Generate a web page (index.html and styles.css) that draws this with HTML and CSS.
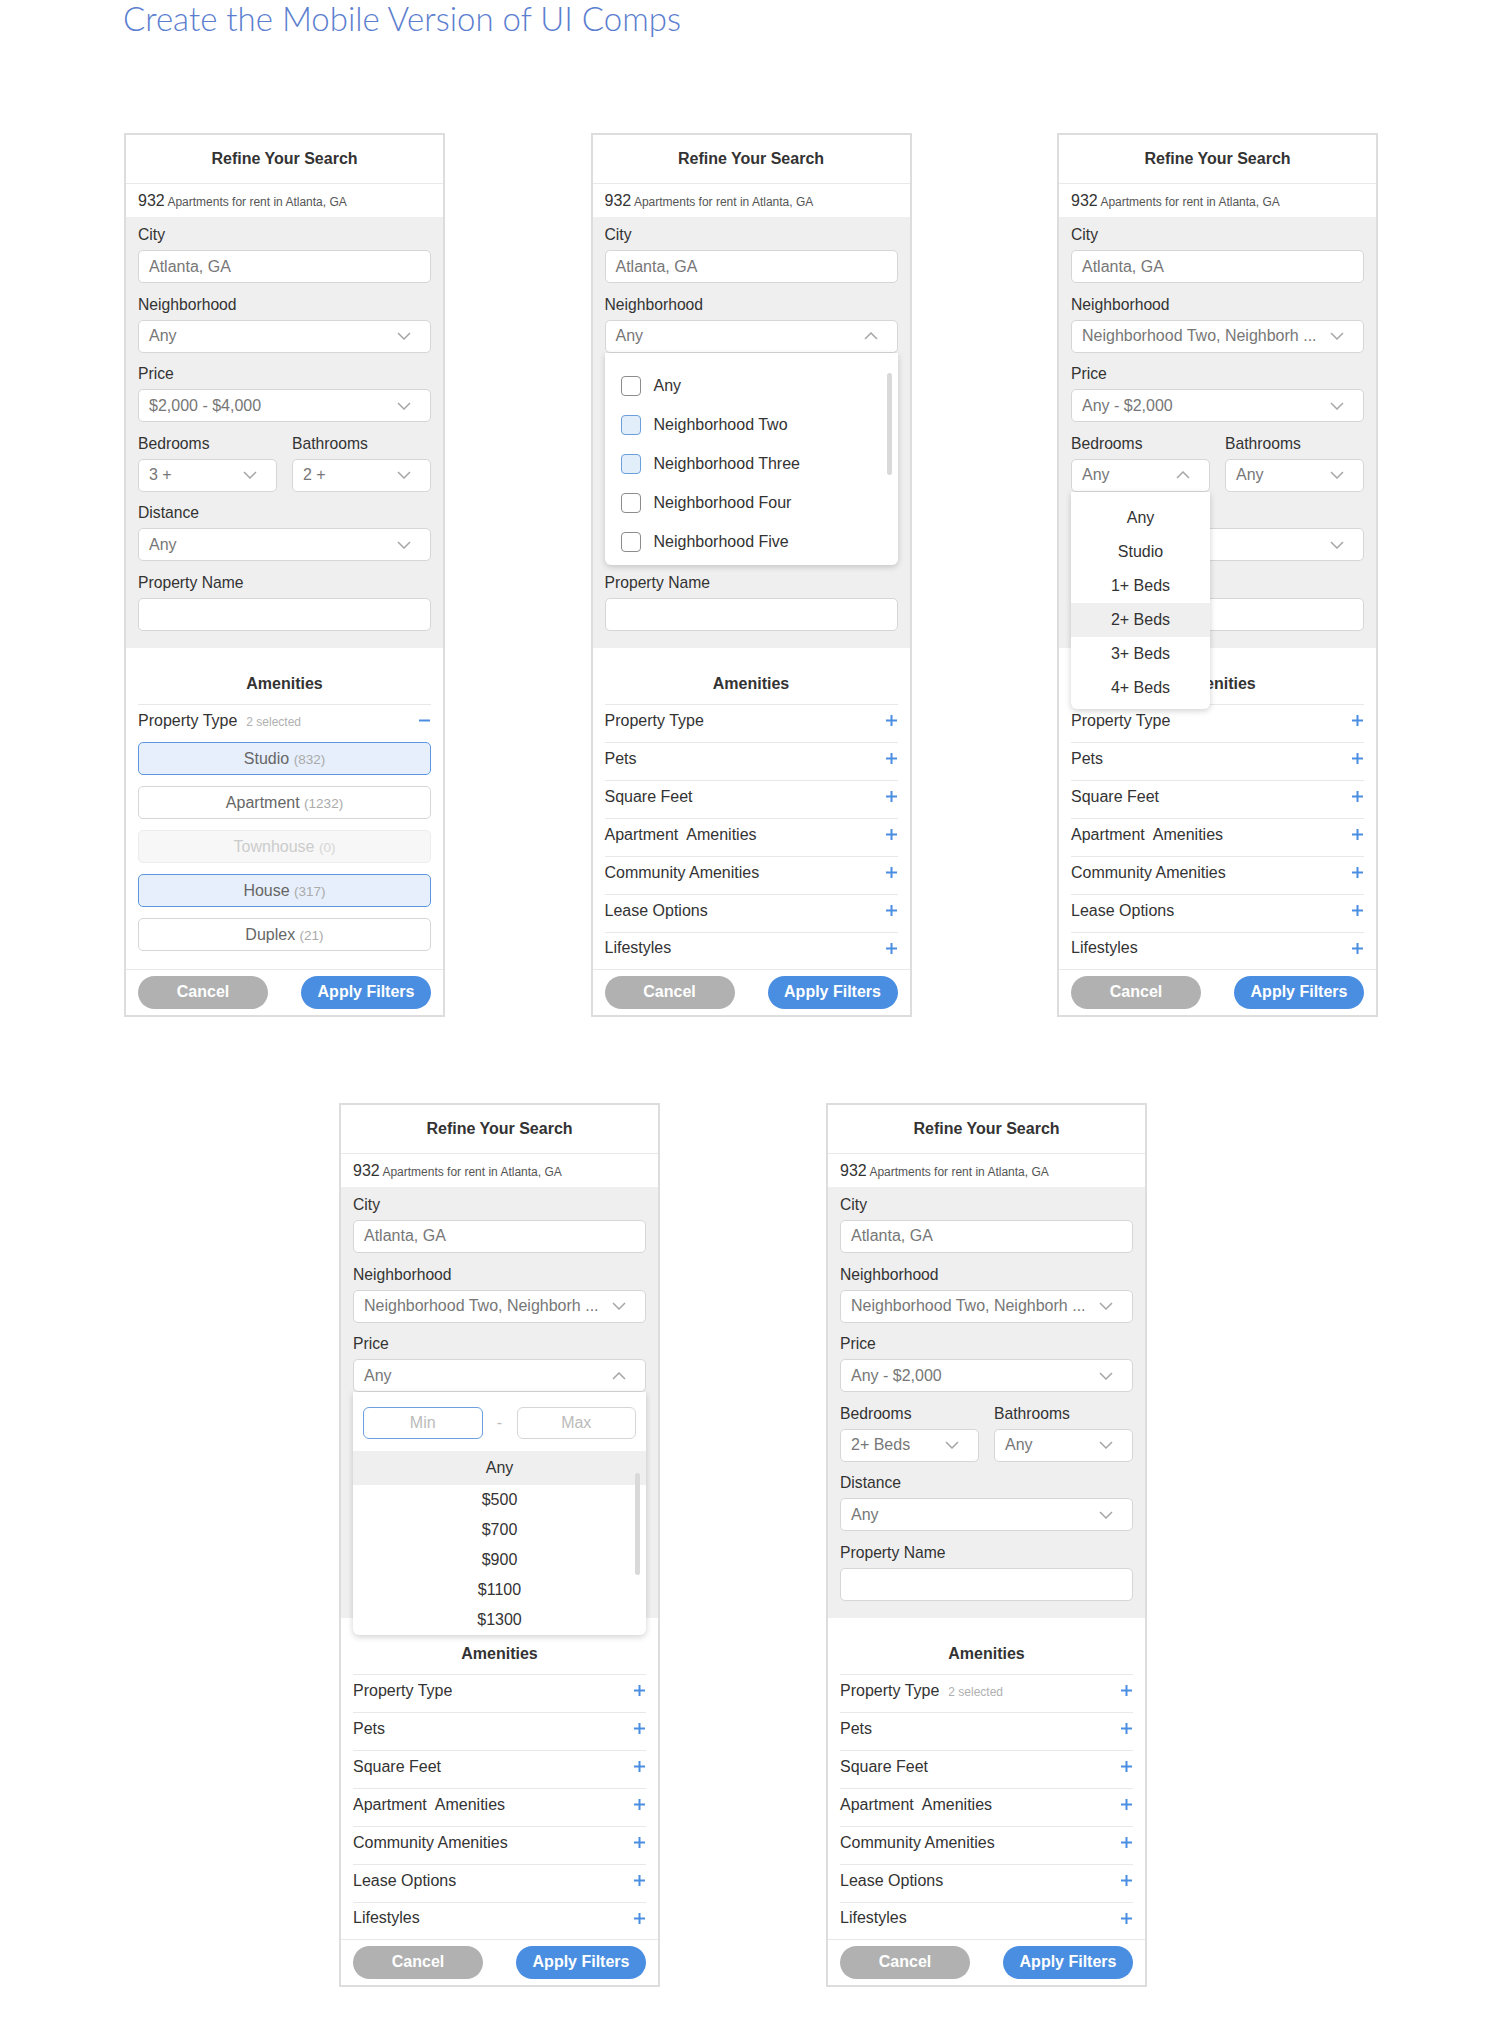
FILE: index.html
```html
<!DOCTYPE html>
<html lang="en">
<head>
    <meta charset="UTF-8">
    <meta name="viewport" content="width=device-width, initial-scale=1.0">
    <title>Mobile Version of UI Comps</title>
    <link rel="stylesheet" href="styles.css">
</head>
<body>
    <h1 class="page-title">Create the Mobile Version of UI Comps</h1>

    <div class="row row-top">

        <!-- 1: property type expanded -->
        <div class="panel">
            <div class="panel-head">Refine Your Search</div>
            <div class="panel-count"><span class="num">932</span> Apartments for rent in Atlanta, GA</div>
            <div class="fields">
                <div class="field">
                    <label>City</label>
                    <div class="control">Atlanta, GA</div>
                </div>
                <div class="field">
                    <label>Neighborhood</label>
                    <div class="control select"><span>Any</span><svg class="chev" viewBox="0 0 14 8"><path d="M1 1l6 6 6-6"/></svg></div>
                </div>
                <div class="field">
                    <label>Price</label>
                    <div class="control select"><span>$2,000 - $4,000</span><svg class="chev" viewBox="0 0 14 8"><path d="M1 1l6 6 6-6"/></svg></div>
                </div>
                <div class="field-pair">
                    <div class="field">
                        <label>Bedrooms</label>
                        <div class="control select"><span>3 +</span><svg class="chev" viewBox="0 0 14 8"><path d="M1 1l6 6 6-6"/></svg></div>
                    </div>
                    <div class="field">
                        <label>Bathrooms</label>
                        <div class="control select"><span>2 +</span><svg class="chev" viewBox="0 0 14 8"><path d="M1 1l6 6 6-6"/></svg></div>
                    </div>
                </div>
                <div class="field">
                    <label>Distance</label>
                    <div class="control select"><span>Any</span><svg class="chev" viewBox="0 0 14 8"><path d="M1 1l6 6 6-6"/></svg></div>
                </div>
                <div class="field">
                    <label>Property Name</label>
                    <div class="control"></div>
                </div>
            </div>
            <div class="amenities">
                <div class="amenities-title">Amenities</div>
                <div class="acc-open">
                    <div class="acc-row">
                        <span>Property Type<small>2 selected</small></span>
                        <svg class="plus" viewBox="0 0 11 11"><path d="M0 5.5h11"/></svg>
                    </div>
                    <div class="type-list">
                        <div class="type-opt selected">Studio <em>(832)</em></div>
                        <div class="type-opt">Apartment <em>(1232)</em></div>
                        <div class="type-opt disabled">Townhouse <em>(0)</em></div>
                        <div class="type-opt selected">House <em>(317)</em></div>
                        <div class="type-opt">Duplex <em>(21)</em></div>
                    </div>
                </div>
            </div>
            <div class="panel-foot">
                <button class="btn btn-cancel">Cancel</button>
                <button class="btn btn-apply">Apply Filters</button>
            </div>
        </div>

        <!-- 2: neighborhood open -->
        <div class="panel">
            <div class="panel-head">Refine Your Search</div>
            <div class="panel-count"><span class="num">932</span> Apartments for rent in Atlanta, GA</div>
            <div class="fields">
                <div class="field">
                    <label>City</label>
                    <div class="control">Atlanta, GA</div>
                </div>
                <div class="field">
                    <label>Neighborhood</label>
                    <div class="dd-wrap">
                        <div class="control select open"><span>Any</span><svg class="chev" viewBox="0 0 14 8"><path d="M1 7l6-6 6 6"/></svg></div>
                        <div class="dropdown check-list">
                            <div class="check-item"><i class="box"></i>Any</div>
                            <div class="check-item"><i class="box on"></i>Neighborhood Two</div>
                            <div class="check-item"><i class="box on"></i>Neighborhood Three</div>
                            <div class="check-item"><i class="box"></i>Neighborhood Four</div>
                            <div class="check-item"><i class="box"></i>Neighborhood Five</div>
                            <div class="scrollbar sb-check"></div>
                        </div>
                    </div>
                </div>
                <div class="field">
                    <label>Price</label>
                    <div class="control select"><span>Any</span><svg class="chev" viewBox="0 0 14 8"><path d="M1 1l6 6 6-6"/></svg></div>
                </div>
                <div class="field-pair">
                    <div class="field">
                        <label>Bedrooms</label>
                        <div class="control select"><span>Any</span><svg class="chev" viewBox="0 0 14 8"><path d="M1 1l6 6 6-6"/></svg></div>
                    </div>
                    <div class="field">
                        <label>Bathrooms</label>
                        <div class="control select"><span>Any</span><svg class="chev" viewBox="0 0 14 8"><path d="M1 1l6 6 6-6"/></svg></div>
                    </div>
                </div>
                <div class="field">
                    <label>Distance</label>
                    <div class="control select"><span>Any</span><svg class="chev" viewBox="0 0 14 8"><path d="M1 1l6 6 6-6"/></svg></div>
                </div>
                <div class="field">
                    <label>Property Name</label>
                    <div class="control"></div>
                </div>
            </div>
            <div class="amenities">
                <div class="amenities-title">Amenities</div>
                <div class="acc-row"><span>Property Type</span><svg class="plus" viewBox="0 0 11 11"><path d="M5.5 0v11M0 5.5h11"/></svg></div>
                <div class="acc-row"><span>Pets</span><svg class="plus" viewBox="0 0 11 11"><path d="M5.5 0v11M0 5.5h11"/></svg></div>
                <div class="acc-row"><span>Square Feet</span><svg class="plus" viewBox="0 0 11 11"><path d="M5.5 0v11M0 5.5h11"/></svg></div>
                <div class="acc-row"><span>Apartment&nbsp; Amenities</span><svg class="plus" viewBox="0 0 11 11"><path d="M5.5 0v11M0 5.5h11"/></svg></div>
                <div class="acc-row"><span>Community Amenities</span><svg class="plus" viewBox="0 0 11 11"><path d="M5.5 0v11M0 5.5h11"/></svg></div>
                <div class="acc-row"><span>Lease Options</span><svg class="plus" viewBox="0 0 11 11"><path d="M5.5 0v11M0 5.5h11"/></svg></div>
                <div class="acc-row"><span>Lifestyles</span><svg class="plus" viewBox="0 0 11 11"><path d="M5.5 0v11M0 5.5h11"/></svg></div>
            </div>
            <div class="panel-foot">
                <button class="btn btn-cancel">Cancel</button>
                <button class="btn btn-apply">Apply Filters</button>
            </div>
        </div>

        <!-- 3: bedrooms open -->
        <div class="panel">
            <div class="panel-head">Refine Your Search</div>
            <div class="panel-count"><span class="num">932</span> Apartments for rent in Atlanta, GA</div>
            <div class="fields">
                <div class="field">
                    <label>City</label>
                    <div class="control">Atlanta, GA</div>
                </div>
                <div class="field">
                    <label>Neighborhood</label>
                    <div class="control select"><span>Neighborhood Two, Neighborh ...</span><svg class="chev" viewBox="0 0 14 8"><path d="M1 1l6 6 6-6"/></svg></div>
                </div>
                <div class="field">
                    <label>Price</label>
                    <div class="control select"><span>Any - $2,000</span><svg class="chev" viewBox="0 0 14 8"><path d="M1 1l6 6 6-6"/></svg></div>
                </div>
                <div class="field-pair">
                    <div class="field">
                        <label>Bedrooms</label>
                        <div class="dd-wrap">
                            <div class="control select open"><span>Any</span><svg class="chev" viewBox="0 0 14 8"><path d="M1 7l6-6 6 6"/></svg></div>
                            <div class="dropdown beds-list">
                                <div class="opt">Any</div>
                                <div class="opt">Studio</div>
                                <div class="opt">1+ Beds</div>
                                <div class="opt active">2+ Beds</div>
                                <div class="opt">3+ Beds</div>
                                <div class="opt">4+ Beds</div>
                            </div>
                        </div>
                    </div>
                    <div class="field">
                        <label>Bathrooms</label>
                        <div class="control select"><span>Any</span><svg class="chev" viewBox="0 0 14 8"><path d="M1 1l6 6 6-6"/></svg></div>
                    </div>
                </div>
                <div class="field">
                    <label>Distance</label>
                    <div class="control select"><span>Any</span><svg class="chev" viewBox="0 0 14 8"><path d="M1 1l6 6 6-6"/></svg></div>
                </div>
                <div class="field">
                    <label>Property Name</label>
                    <div class="control"></div>
                </div>
            </div>
            <div class="amenities">
                <div class="amenities-title">Amenities</div>
                <div class="acc-row"><span>Property Type</span><svg class="plus" viewBox="0 0 11 11"><path d="M5.5 0v11M0 5.5h11"/></svg></div>
                <div class="acc-row"><span>Pets</span><svg class="plus" viewBox="0 0 11 11"><path d="M5.5 0v11M0 5.5h11"/></svg></div>
                <div class="acc-row"><span>Square Feet</span><svg class="plus" viewBox="0 0 11 11"><path d="M5.5 0v11M0 5.5h11"/></svg></div>
                <div class="acc-row"><span>Apartment&nbsp; Amenities</span><svg class="plus" viewBox="0 0 11 11"><path d="M5.5 0v11M0 5.5h11"/></svg></div>
                <div class="acc-row"><span>Community Amenities</span><svg class="plus" viewBox="0 0 11 11"><path d="M5.5 0v11M0 5.5h11"/></svg></div>
                <div class="acc-row"><span>Lease Options</span><svg class="plus" viewBox="0 0 11 11"><path d="M5.5 0v11M0 5.5h11"/></svg></div>
                <div class="acc-row"><span>Lifestyles</span><svg class="plus" viewBox="0 0 11 11"><path d="M5.5 0v11M0 5.5h11"/></svg></div>
            </div>
            <div class="panel-foot">
                <button class="btn btn-cancel">Cancel</button>
                <button class="btn btn-apply">Apply Filters</button>
            </div>
        </div>
    </div>

    <div class="row row-bottom">

        <!-- 4: price open -->
        <div class="panel">
            <div class="panel-head">Refine Your Search</div>
            <div class="panel-count"><span class="num">932</span> Apartments for rent in Atlanta, GA</div>
            <div class="fields">
                <div class="field">
                    <label>City</label>
                    <div class="control">Atlanta, GA</div>
                </div>
                <div class="field">
                    <label>Neighborhood</label>
                    <div class="control select"><span>Neighborhood Two, Neighborh ...</span><svg class="chev" viewBox="0 0 14 8"><path d="M1 1l6 6 6-6"/></svg></div>
                </div>
                <div class="field">
                    <label>Price</label>
                    <div class="dd-wrap">
                        <div class="control select open"><span>Any</span><svg class="chev" viewBox="0 0 14 8"><path d="M1 7l6-6 6 6"/></svg></div>
                        <div class="dropdown price-list">
                            <div class="range">
                                <div class="range-box focus">Min</div>
                                <span class="range-sep">-</span>
                                <div class="range-box">Max</div>
                            </div>
                            <div class="opt first active">Any</div>
                            <div class="opt">$500</div>
                            <div class="opt">$700</div>
                            <div class="opt">$900</div>
                            <div class="opt">$1100</div>
                            <div class="opt">$1300</div>
                            <div class="scrollbar sb-price"></div>
                        </div>
                    </div>
                </div>
                <div class="field-pair">
                    <div class="field">
                        <label>Bedrooms</label>
                        <div class="control select"><span>Any</span><svg class="chev" viewBox="0 0 14 8"><path d="M1 1l6 6 6-6"/></svg></div>
                    </div>
                    <div class="field">
                        <label>Bathrooms</label>
                        <div class="control select"><span>Any</span><svg class="chev" viewBox="0 0 14 8"><path d="M1 1l6 6 6-6"/></svg></div>
                    </div>
                </div>
                <div class="field">
                    <label>Distance</label>
                    <div class="control select"><span>Any</span><svg class="chev" viewBox="0 0 14 8"><path d="M1 1l6 6 6-6"/></svg></div>
                </div>
                <div class="field">
                    <label>Property Name</label>
                    <div class="control"></div>
                </div>
            </div>
            <div class="amenities">
                <div class="amenities-title">Amenities</div>
                <div class="acc-row"><span>Property Type</span><svg class="plus" viewBox="0 0 11 11"><path d="M5.5 0v11M0 5.5h11"/></svg></div>
                <div class="acc-row"><span>Pets</span><svg class="plus" viewBox="0 0 11 11"><path d="M5.5 0v11M0 5.5h11"/></svg></div>
                <div class="acc-row"><span>Square Feet</span><svg class="plus" viewBox="0 0 11 11"><path d="M5.5 0v11M0 5.5h11"/></svg></div>
                <div class="acc-row"><span>Apartment&nbsp; Amenities</span><svg class="plus" viewBox="0 0 11 11"><path d="M5.5 0v11M0 5.5h11"/></svg></div>
                <div class="acc-row"><span>Community Amenities</span><svg class="plus" viewBox="0 0 11 11"><path d="M5.5 0v11M0 5.5h11"/></svg></div>
                <div class="acc-row"><span>Lease Options</span><svg class="plus" viewBox="0 0 11 11"><path d="M5.5 0v11M0 5.5h11"/></svg></div>
                <div class="acc-row"><span>Lifestyles</span><svg class="plus" viewBox="0 0 11 11"><path d="M5.5 0v11M0 5.5h11"/></svg></div>
            </div>
            <div class="panel-foot">
                <button class="btn btn-cancel">Cancel</button>
                <button class="btn btn-apply">Apply Filters</button>
            </div>
        </div>

        <!-- 5: all closed -->
        <div class="panel">
            <div class="panel-head">Refine Your Search</div>
            <div class="panel-count"><span class="num">932</span> Apartments for rent in Atlanta, GA</div>
            <div class="fields">
                <div class="field">
                    <label>City</label>
                    <div class="control">Atlanta, GA</div>
                </div>
                <div class="field">
                    <label>Neighborhood</label>
                    <div class="control select"><span>Neighborhood Two, Neighborh ...</span><svg class="chev" viewBox="0 0 14 8"><path d="M1 1l6 6 6-6"/></svg></div>
                </div>
                <div class="field">
                    <label>Price</label>
                    <div class="control select"><span>Any - $2,000</span><svg class="chev" viewBox="0 0 14 8"><path d="M1 1l6 6 6-6"/></svg></div>
                </div>
                <div class="field-pair">
                    <div class="field">
                        <label>Bedrooms</label>
                        <div class="control select"><span>2+ Beds</span><svg class="chev" viewBox="0 0 14 8"><path d="M1 1l6 6 6-6"/></svg></div>
                    </div>
                    <div class="field">
                        <label>Bathrooms</label>
                        <div class="control select"><span>Any</span><svg class="chev" viewBox="0 0 14 8"><path d="M1 1l6 6 6-6"/></svg></div>
                    </div>
                </div>
                <div class="field">
                    <label>Distance</label>
                    <div class="control select"><span>Any</span><svg class="chev" viewBox="0 0 14 8"><path d="M1 1l6 6 6-6"/></svg></div>
                </div>
                <div class="field">
                    <label>Property Name</label>
                    <div class="control"></div>
                </div>
            </div>
            <div class="amenities">
                <div class="amenities-title">Amenities</div>
                <div class="acc-row"><span>Property Type<small>2 selected</small></span><svg class="plus" viewBox="0 0 11 11"><path d="M5.5 0v11M0 5.5h11"/></svg></div>
                <div class="acc-row"><span>Pets</span><svg class="plus" viewBox="0 0 11 11"><path d="M5.5 0v11M0 5.5h11"/></svg></div>
                <div class="acc-row"><span>Square Feet</span><svg class="plus" viewBox="0 0 11 11"><path d="M5.5 0v11M0 5.5h11"/></svg></div>
                <div class="acc-row"><span>Apartment&nbsp; Amenities</span><svg class="plus" viewBox="0 0 11 11"><path d="M5.5 0v11M0 5.5h11"/></svg></div>
                <div class="acc-row"><span>Community Amenities</span><svg class="plus" viewBox="0 0 11 11"><path d="M5.5 0v11M0 5.5h11"/></svg></div>
                <div class="acc-row"><span>Lease Options</span><svg class="plus" viewBox="0 0 11 11"><path d="M5.5 0v11M0 5.5h11"/></svg></div>
                <div class="acc-row"><span>Lifestyles</span><svg class="plus" viewBox="0 0 11 11"><path d="M5.5 0v11M0 5.5h11"/></svg></div>
            </div>
            <div class="panel-foot">
                <button class="btn btn-cancel">Cancel</button>
                <button class="btn btn-apply">Apply Filters</button>
            </div>
        </div>
    </div>
</body>
</html>
```

FILE: styles.css
```css
body {
    margin: 0;
    background-color: #ffffff;
    font-family: "Liberation Sans", Arial, sans-serif;
    color: #333333;
}

.page-title {
    margin: 0 0 0 123px;
    padding-top: 1px;
    font-family: Lato, "Open Sans", sans-serif;
    font-weight: 300;
    font-size: 33px;
    line-height: 34px;
    color: #5b7ecf;
}

.row {
    display: flex;
    align-items: flex-start;
}

.row-top {
    margin-top: 98px;
    padding-left: 124px;
    gap: 145.5px;
}

.row-bottom {
    margin-top: 86px;
    padding-left: 339px;
    gap: 166px;
}

/* panel */
.panel {
    width: 321px;
    box-sizing: border-box;
    border: 2px solid #dddddd;
    background-color: #ffffff;
}

.panel-head {
    height: 48px;
    line-height: 48px;
    border-bottom: 1px solid #e9e9e9;
    text-align: center;
    font-weight: bold;
    font-size: 16px;
    color: #333333;
}

.panel-count {
    height: 33px;
    line-height: 33px;
    padding: 0 12px;
    font-size: 12px;
    color: #555555;
}

.panel-count .num {
    font-size: 16px;
    color: #333333;
}

/* form fields */
.fields {
    background-color: #efefef;
    padding: 8px 12px 17px;
    display: flex;
    flex-direction: column;
    gap: 11.6px;
}

.field label {
    display: block;
    height: 20px;
    line-height: 20px;
    margin-bottom: 5px;
    font-size: 15.7px;
    color: #333333;
}

.field-pair {
    display: grid;
    grid-template-columns: 1fr 1fr;
    gap: 15px;
}

.control {
    height: 33px;
    box-sizing: border-box;
    background-color: #ffffff;
    border: 1px solid #d6d6d6;
    border-radius: 5px;
    padding: 0 19px 0 10px;
    display: flex;
    align-items: center;
    font-size: 16px;
    color: #777777;
    white-space: nowrap;
}

.select {
    justify-content: space-between;
    gap: 8px;
}

.chev {
    width: 14px;
    height: 8px;
    flex-shrink: 0;
    fill: none;
    stroke: #a6a6a6;
    stroke-width: 1.5;
}

/* dropdowns */
.dd-wrap {
    position: relative;
}

.dropdown {
    position: absolute;
    top: 100%;
    left: 0;
    right: 0;
    z-index: 5;
    background-color: #ffffff;
    border-radius: 0 0 6px 6px;
    box-shadow: 0 2px 6px rgba(0, 0, 0, 0.18);
}

.check-list {
    padding: 14px 0 3px;
}

.check-item {
    height: 39px;
    display: flex;
    align-items: center;
    padding-left: 16px;
    font-size: 16px;
    color: #333333;
}

.box {
    width: 18px;
    height: 18px;
    border: 1px solid #8c8c8c;
    border-radius: 4px;
    margin-right: 13px;
    background-color: #ffffff;
}

.box.on {
    border-color: #6b9fdc;
    background-color: #e3eefb;
}

.scrollbar {
    position: absolute;
    right: 6px;
    width: 5px;
    border-radius: 3px;
    background-color: #d9d9d9;
}

.sb-check {
    top: 20px;
    height: 102px;
}

.beds-list {
    padding: 9px 0 4px;
}

.opt {
    height: 34px;
    line-height: 34px;
    text-align: center;
    font-size: 16px;
    color: #333333;
}

.opt.active {
    background-color: #efefef;
}

.price-list .opt {
    height: 30px;
    line-height: 30px;
}

.price-list .opt.first {
    height: 34px;
    line-height: 34px;
}

.range {
    display: flex;
    align-items: center;
    padding: 15px 10px 12px;
}

.range-box {
    flex: 1;
    height: 32px;
    line-height: 30px;
    box-sizing: border-box;
    border: 1px solid #d6d6d6;
    border-radius: 6px;
    text-align: center;
    font-size: 16px;
    color: #bbbbbb;
}

.range-box.focus {
    border: 1.5px solid #6b9fe0;
}

.range-sep {
    width: 34px;
    text-align: center;
    color: #bbbbbb;
    font-size: 16px;
}

.sb-price {
    top: 81px;
    height: 102px;
}

/* amenities */
.amenities {
    padding: 0 12px;
}

.amenities-title {
    padding: 26px 0 10px;
    line-height: 20px;
    text-align: center;
    font-weight: bold;
    font-size: 16px;
    color: #333333;
}

.acc-row {
    height: 38px;
    box-sizing: border-box;
    border-top: 1px solid #e8e8e8;
    padding-bottom: 5px;
    display: flex;
    align-items: center;
    justify-content: space-between;
    font-size: 16px;
    color: #333333;
}

.amenities > .acc-row:last-child {
    height: 37px;
}

.acc-row small {
    margin-left: 9px;
    font-size: 12px;
    color: #b0b0b0;
}

.plus {
    width: 11px;
    height: 11px;
    margin-right: 1px;
    fill: none;
    stroke: #4a8ee2;
    stroke-width: 2;
}

.type-list {
    display: flex;
    flex-direction: column;
    gap: 11px;
    padding-bottom: 18px;
}

.type-opt {
    height: 33px;
    line-height: 31px;
    box-sizing: border-box;
    border: 1px solid #d6d6d6;
    border-radius: 5px;
    text-align: center;
    font-size: 16px;
    color: #666666;
}

.type-opt em {
    font-style: normal;
    font-size: 13.5px;
    color: #aaaaaa;
}

.type-opt.selected {
    background-color: #e6effb;
    border-color: #5b97df;
}

.type-opt.disabled {
    background-color: #f7f7f7;
    border-color: #ececec;
    color: #cccccc;
}

.type-opt.disabled em {
    color: #d6d6d6;
}

/* footer */
.panel-foot {
    border-top: 1px solid #e8e8e8;
    padding: 6px 12px;
    display: flex;
    justify-content: space-between;
}

.btn {
    width: 130px;
    height: 33px;
    border: none;
    border-radius: 17px;
    font-family: "Liberation Sans", Arial, sans-serif;
    font-weight: bold;
    font-size: 16px;
    color: #ffffff;
    cursor: pointer;
}

.btn-cancel {
    background-color: #b1b1b1;
}

.btn-apply {
    background-color: #4a8ee2;
}
```
